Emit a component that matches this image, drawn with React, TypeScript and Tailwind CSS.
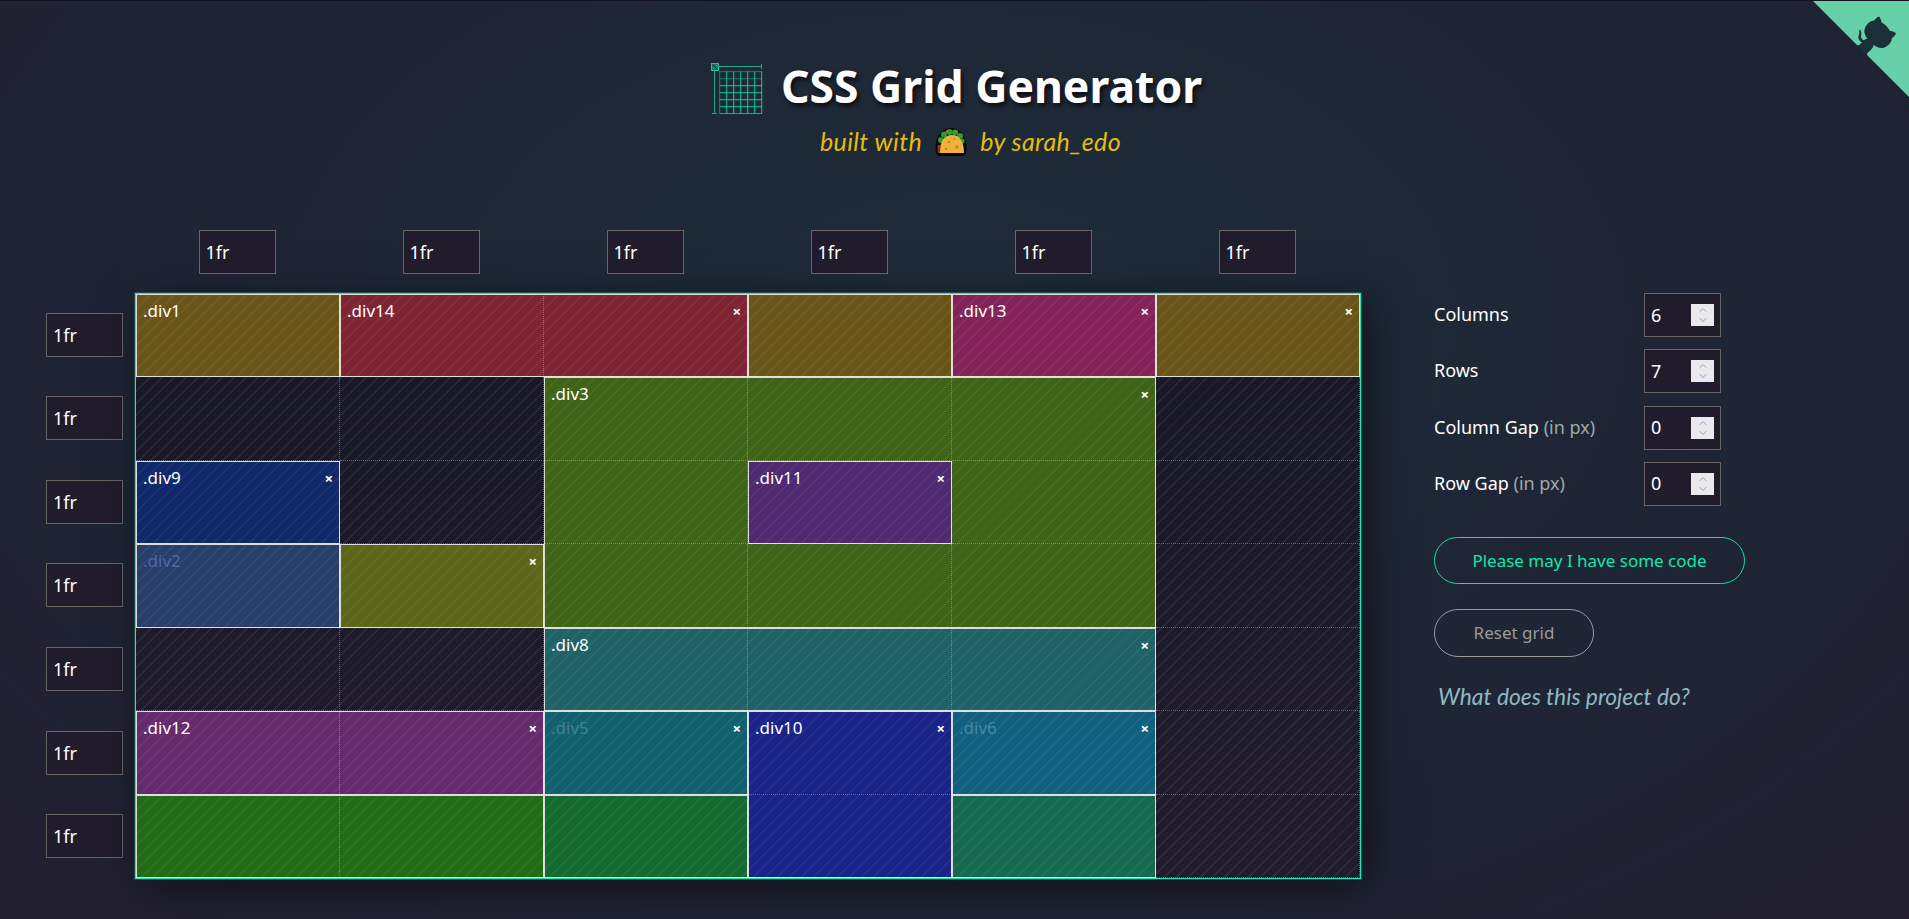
import { ChevronDown, ChevronUp } from 'lucide-react'

const stripes =
  'bg-[image:repeating-linear-gradient(135deg,rgba(255,255,255,0.055)_0,rgba(255,255,255,0.055)_1.4px,transparent_1.4px,transparent_8.5px)]'

type Item = {
  place: string
  color: string
  label?: string
  dim?: string
  close?: boolean
}

const items: Item[] = [
  { place: 'col-start-1 row-start-1', color: 'bg-[#6a5518]', label: '.div1' },
  { place: 'col-start-2 col-span-2 row-start-1', color: 'bg-[#7f2433]', label: '.div14', close: true },
  { place: 'col-start-4 row-start-1', color: 'bg-[#6a5518]' },
  { place: 'col-start-5 row-start-1', color: 'bg-[#852358]', label: '.div13', close: true },
  { place: 'col-start-6 row-start-1', color: 'bg-[#6a5518]', close: true },
  { place: 'col-start-3 col-span-3 row-start-2 row-span-3', color: 'bg-[#3f6417]', label: '.div3', close: true },
  { place: 'col-start-1 row-start-3', color: 'bg-[#10296b]', label: '.div9', close: true },
  { place: 'col-start-4 row-start-3', color: 'bg-[#4f2a70]', label: '.div11', close: true },
  { place: 'col-start-1 row-start-4', color: 'bg-[#273f69]', label: '.div2', dim: 'text-[#4d69a8]' },
  { place: 'col-start-2 row-start-4', color: 'bg-[#5c6518]', close: true },
  { place: 'col-start-3 col-span-3 row-start-5', color: 'bg-[#216268]', label: '.div8', close: true },
  { place: 'col-start-1 col-span-2 row-start-6', color: 'bg-[#652b6d]', label: '.div12', close: true },
  { place: 'col-start-3 row-start-6', color: 'bg-[#10616d]', label: '.div5', dim: 'text-[#457f99]', close: true },
  { place: 'col-start-4 row-start-6 row-span-2', color: 'bg-[#1a2388]', label: '.div10', close: true },
  { place: 'col-start-5 row-start-6', color: 'bg-[#106080]', label: '.div6', dim: 'text-[#4589a8]', close: true },
  { place: 'col-start-1 col-span-2 row-start-7', color: 'bg-[#226b17]' },
  { place: 'col-start-3 row-start-7', color: 'bg-[#156a2f]' },
  { place: 'col-start-5 row-start-7', color: 'bg-[#14694f]' },
]

const cells = Array.from({ length: 42 }, (_, i) => ({ col: (i % 6) + 1, row: Math.floor(i / 6) + 1 }))
const settings = [
  { label: 'Columns', value: '6' },
  { label: 'Rows', value: '7' },
  { label: 'Column Gap', hint: '(in px)', value: '0' },
  { label: 'Row Gap', hint: '(in px)', value: '0' },
]

function TrackInput() {
  return (
    <input
      readOnly
      value="1fr"
      className="h-[44px] w-[77px] border border-[#666] bg-[#211c2c] pl-[6px] text-[18px] text-white outline-none"
    />
  )
}

function GridLogo() {
  const lines = [0, 1, 2, 3, 4, 5, 6]
  return (
    <svg width="52" height="52" viewBox="0 0 52 52" fill="none" stroke="#17c79c" strokeWidth="1" className="mt-[3px] shrink-0">
      <rect x="0.5" y="1.5" width="7" height="7" fill="#17806b" />
      <path d="M1.5 2.5l5 5" stroke="#0d2b30" />
      <path d="M8 4.5h42.5M50.5 2v5M3.5 8v43M1 51.5h5" opacity="0.8" />
      {lines.map((n) => (
        <path key={`v${n}`} d={`M${8.7 + n * 7} 9.5v42`} opacity={n === 0 ? 0.55 : 1} />
      ))}
      {lines.map((n) => (
        <path key={`h${n}`} d={`M8.5 ${9.7 + n * 7}h42.5`} opacity={n < 2 ? 0.55 : 1} />
      ))}
    </svg>
  )
}

function Taco() {
  return (
    <svg width="34" height="30" viewBox="0 0 34 30" className="mx-[12px] shrink-0">
      <path d="M2 27C0 13 6 2 17 2s17 11 15 25c-1 2-3 3-5 3H6c-2 0-3-1-4-3z" fill="#070707" />
      <g fill="#2f9e2c">
        <circle cx="7" cy="14" r="3" />
        <circle cx="10" cy="8.5" r="3" />
        <circle cx="15.5" cy="6" r="3" />
        <circle cx="21" cy="6.5" r="3" />
        <circle cx="26" cy="10" r="3" />
        <circle cx="28" cy="15" r="2.6" />
      </g>
      <circle cx="13" cy="5.5" r="1.2" fill="#e05a44" />
      <circle cx="23" cy="6" r="1" fill="#e05a44" />
      <rect x="3.5" y="19" width="4.5" height="8" fill="#8a2a20" />
      <path d="M6 27C6 15 10 9 18 9s12 7 12 18z" fill="#eeb23a" />
      <circle cx="15" cy="16" r="1.3" fill="#c4831d" />
      <circle cx="23" cy="21" r="1.7" fill="#c4831d" />
      <circle cx="20" cy="13" r="1" fill="#c4831d" />
      <circle cx="12" cy="23" r="1.1" fill="#c4831d" />
    </svg>
  )
}

function GithubCorner() {
  return (
    <svg width="96" height="96" viewBox="0 0 250 250" className="absolute right-0 top-0 text-[#1c2f38]">
      <path d="M0,0 L115,115 L130,115 L142,142 L250,250 L250,0 Z" fill="#66d1a9" />
      <path
        d="M128.3,109.0 C113.8,99.7 119.0,89.6 119.0,89.6 C122.0,82.7 120.5,78.6 120.5,78.6 C119.2,72.0 123.4,76.3 123.4,76.3 C127.3,80.9 125.5,87.3 125.5,87.3 C122.9,97.6 130.6,101.9 134.4,103.2"
        fill="currentColor"
      />
      <path
        d="M115.0,115.0 C114.9,115.1 118.7,116.5 119.8,115.4 L133.7,101.6 C136.9,99.2 139.9,98.4 142.2,98.6 C133.8,88.0 127.5,74.4 143.8,58.0 C148.5,53.4 154.0,51.2 159.7,51.0 C160.3,49.4 163.2,43.6 171.4,40.1 C171.4,40.1 176.1,42.5 178.8,56.2 C183.1,58.6 187.2,61.8 190.9,65.4 C194.5,69.0 197.7,73.2 200.1,77.6 C213.8,80.2 216.3,84.9 216.3,84.9 C212.7,93.1 206.9,96.0 205.4,96.6 C205.1,102.4 203.0,107.8 198.3,112.5 C181.9,128.9 168.3,122.5 157.7,114.1 C157.9,116.9 156.7,120.9 152.7,124.9 L141.0,136.5 C139.8,137.7 141.6,141.9 141.8,141.8 Z"
        fill="currentColor"
      />
    </svg>
  )
}

function SettingRow({ label, hint, value }: { label: string; hint?: string; value: string }) {
  return (
    <div className="flex h-[44px] w-[287px] items-center justify-between">
      <span className="whitespace-nowrap pb-[1px] text-[18px] text-white">
        {label} {hint && <span className="text-[#9fa8ad]">{hint}</span>}
      </span>
      <div className="flex h-[44px] w-[77px] items-center justify-between border border-[#666] bg-[#211c2c] pl-[6px] pr-[6px] text-[18px] text-white">
        {value}
        <span className="flex h-[22px] w-[23px] flex-col items-center justify-center bg-[#e9e9ee] text-[#9a9aa3]">
          <ChevronUp size={12} strokeWidth={2} className="-mb-[1px]" />
          <ChevronDown size={12} strokeWidth={2} className="-mt-[1px]" />
        </span>
      </div>
    </div>
  )
}

export default function App() {
  return (
    <div className="relative h-[919px] w-[1909px] overflow-hidden border-t border-[#14161f] bg-[radial-gradient(ellipse_at_50%_35%,#1f2c39_0%,#1e2535_60%,#231f30_100%)] font-['Noto_Sans',sans-serif] text-white">
      <GithubCorner />

      <header className="flex h-[229px] flex-col items-center pt-[55px]">
        <div className="flex items-center gap-[18px] pl-[4px]">
          <GridLogo />
          <h1 className="text-[44.5px] font-bold leading-[60px] [text-shadow:2px_3px_5px_rgba(0,0,0,0.75)]">
            CSS Grid Generator
          </h1>
        </div>
        <p className="mt-[9px] flex items-center pl-[32px] font-['Lato',sans-serif] text-[25px] italic leading-[32px] tracking-[0.4px] text-[#e3bd0d]">
          built with
          <Taco />
          by sarah_edo
        </p>
      </header>

      <main className="flex items-start">
        <div className="flex w-[135px] flex-col pl-[46px] pt-[63px]">
          <div className="grid h-[585px] grid-rows-7 items-center">
            {Array.from({ length: 7 }, (_, i) => (
              <TrackInput key={i} />
            ))}
          </div>
        </div>

        <div className="w-[1226px]">
          <div className="mb-[19px] grid grid-cols-6 justify-items-center pr-[2px]">
            {Array.from({ length: 6 }, (_, i) => (
              <TrackInput key={i} />
            ))}
          </div>
          <div
            className="grid h-[586px] grid-cols-6 grid-rows-7 border border-[#1de9b0] bg-[image:repeating-linear-gradient(135deg,rgba(255,255,255,0.07)_0,rgba(255,255,255,0.07)_1.4px,transparent_1.4px,transparent_8.5px),linear-gradient(180deg,#181826,#211c2c)] shadow-[8px_8px_40px_rgba(0,0,0,0.55)] ring-1 ring-[#1de9b0]/25"
          >
            {items.map((item) => (
              <div
                key={item.place}
                className={`flex items-start justify-between border border-[#dcdcdc] px-[6px] pt-[3px] text-[17px] leading-[26px] ${item.place} ${item.color} ${stripes}`}
              >
                <span className={item.dim ?? 'text-white'}>{item.label}</span>
                {item.close && <span className="ml-auto text-[15px] font-bold text-white">×</span>}
              </div>
            ))}
            {cells.map((cell) => (
              <div
                key={`${cell.col}-${cell.row}`}
                style={{ gridColumn: cell.col, gridRow: cell.row }}
                className="pointer-events-none border-b border-r border-dotted border-white/30"
              />
            ))}
          </div>
        </div>

        <aside className="pl-[73px] pt-[63px]">
          <div className="flex flex-col gap-[12.3px]">
            {settings.map((setting) => (
              <SettingRow key={setting.label} {...setting} />
            ))}
          </div>
          <button className="mt-[31px] block h-[47px] w-[311px] rounded-full border border-[#14dfa5] text-[17px] text-[#14e6a8]">
            Please may I have some code
          </button>
          <button className="mt-[25px] block h-[48px] w-[160px] rounded-full border border-[#9a9a9a] text-[17px] text-[#9a9a9a]">
            Reset grid
          </button>
          <p className="ml-[4px] mt-[23px] font-['Lato',sans-serif] text-[22.8px] italic leading-[32px] text-[#8fb8c4]">
            What does this project do?
          </p>
        </aside>
      </main>
    </div>
  )
}
